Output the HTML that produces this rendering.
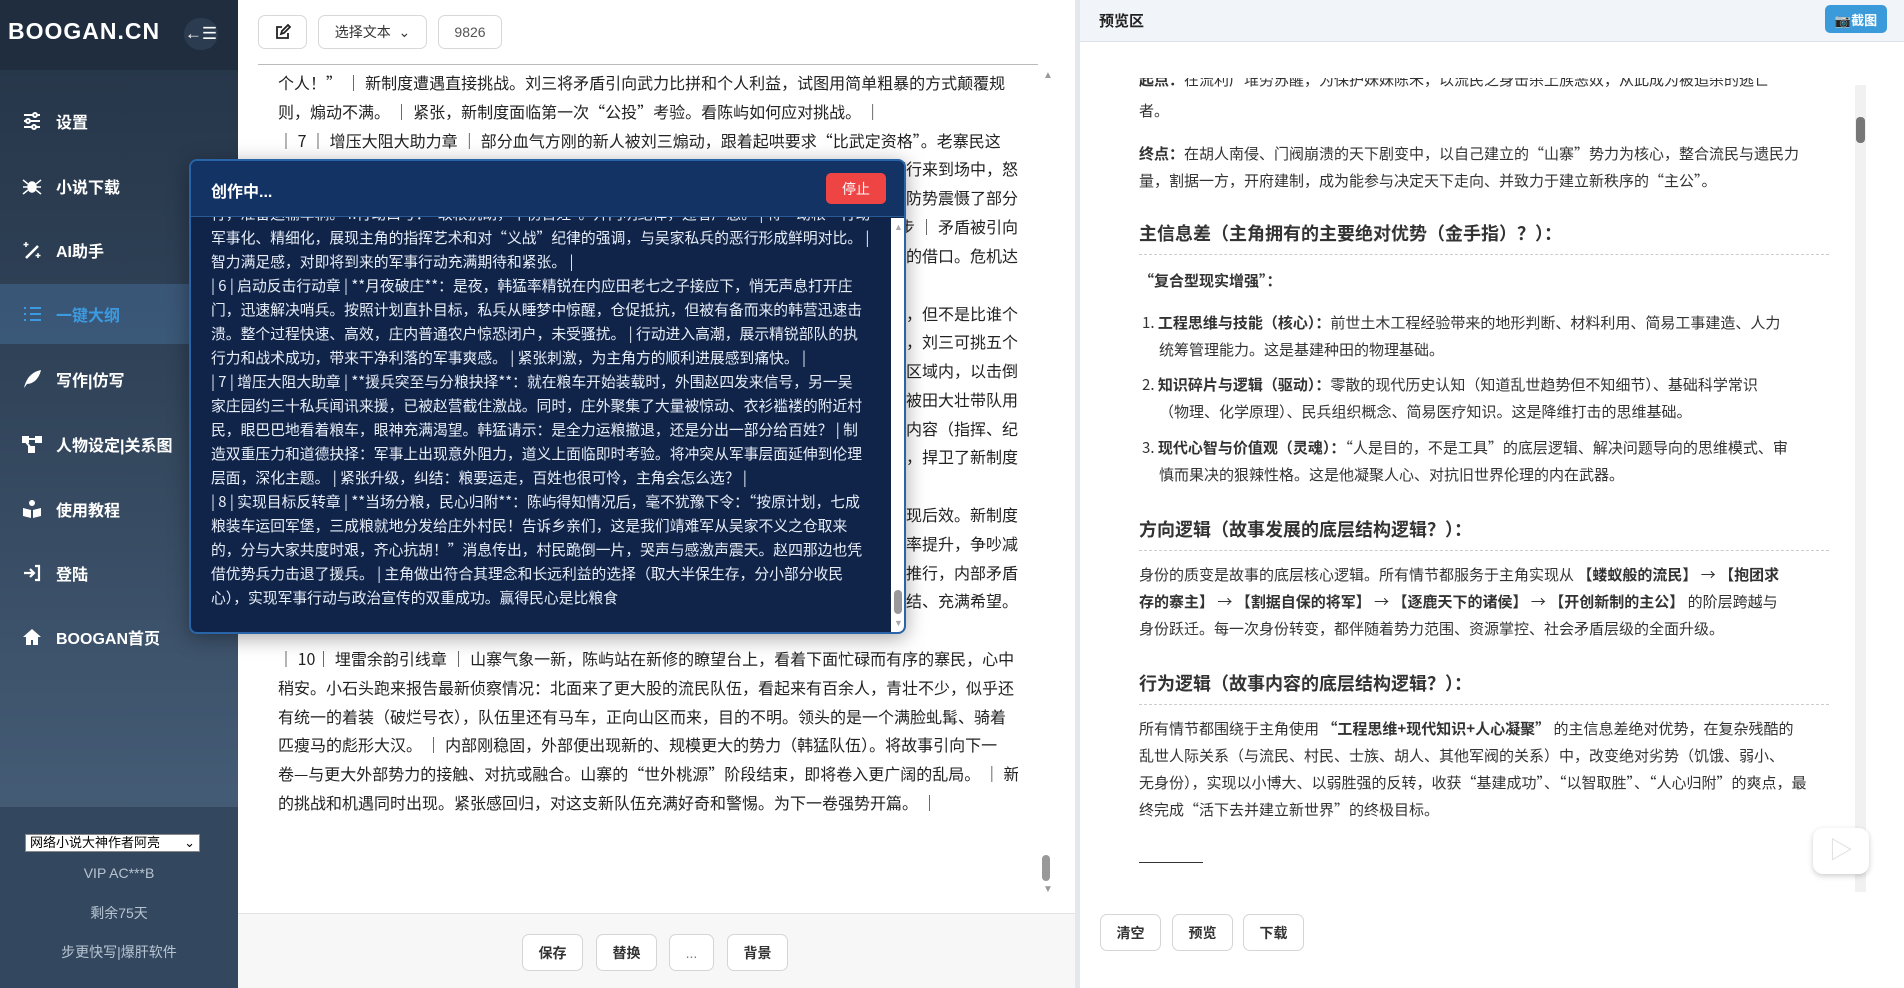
<!DOCTYPE html>
<html><head><meta charset="utf-8">
<style>
*{box-sizing:border-box;margin:0;padding:0}
body{width:1904px;height:988px;overflow:hidden;position:relative;font-family:"Liberation Sans","Noto Sans CJK SC",sans-serif;background:#fff}
.side{position:absolute;left:0;top:0;width:238px;height:988px;background:linear-gradient(180deg,#253447 0%,#31445a 40%,#445b75 80%,#3f566f 100%)}
.side .hd{height:70px;background:#1f2d3e;position:relative}
.logo{position:absolute;left:8px;top:18px;color:#fff;font-size:23px;font-weight:bold;letter-spacing:1px}
.coll{position:absolute;left:184px;top:18px;width:34px;height:32px;border-radius:16px;background:#2c3c50;color:#fff;font-size:17px;text-align:center;line-height:32px}
.mi{position:absolute;left:0;width:238px;height:60px;color:#fff;font-size:16px;font-weight:bold;display:flex;align-items:center}
.mi svg{width:20px;height:20px;margin-left:22px;margin-right:14px}
.mi.act{background:rgba(80,130,180,.35);color:#3c9be0}
.sbot{position:absolute;left:0;top:807px;width:238px;height:181px;background:#33485f}
.sel{position:absolute;left:25px;top:834px;width:175px;height:18px;background:#fff;border:1px solid #888;font-size:13px;color:#000;padding-left:4px;line-height:16px}
.sbt{position:absolute;left:0;width:238px;text-align:center;color:#b8c4d2;font-size:14px}
.ed{position:absolute;left:238px;top:0;width:837px;height:988px;background:#fff}
.tb{position:absolute;top:15px;height:34px;border:1px solid #d8d8d8;border-radius:7px;background:#fff;font-size:14px;color:#333;display:flex;align-items:center;justify-content:center}
.line{position:absolute;left:20px;width:780px;height:1px;top:64px;background:#bbb}
.et{position:absolute;left:40px;width:740px;font-family:"Noto Sans CJK SC",sans-serif;font-size:16px;color:#222;height:29px;line-height:29px;white-space:nowrap;overflow:hidden}
.et.r{display:flex;justify-content:flex-end}
.ebot{position:absolute;left:0;top:913px;width:837px;height:75px;background:#f7f7f8;border-top:1px solid #e3e3e3}
.bb{position:absolute;top:20px;height:37px;border:1px solid #d5d5d5;border-radius:7px;background:#fff;font-size:14px;font-weight:bold;color:#333;display:flex;align-items:center;justify-content:center}
.divd{position:absolute;left:1075px;top:0;width:5px;height:988px;background:#e4e7eb}
.pv{position:absolute;left:1080px;top:0;width:824px;height:988px;background:#fff}
.pvh{height:42px;background:#f1f4f8;border-bottom:1px solid #dfe3e8;position:relative}
.pvh b{position:absolute;left:19px;top:10px;font-size:15px;color:#222}
.shot{position:absolute;left:745px;top:5px;width:62px;height:28px;background:#3b9ad9;border-radius:5px;color:#fff;font-size:13px;font-weight:bold;display:flex;align-items:center;justify-content:center}
.pc{position:absolute;left:59px;width:690px;font-family:"Noto Sans CJK SC",sans-serif;font-size:15px;color:#333;line-height:27px}
.pc p{white-space:nowrap}
.h3{font-size:18px;font-weight:bold;position:absolute;left:59px;width:690px;border-bottom:1px dashed #ccc;padding-bottom:8px;font-family:"Noto Sans CJK SC",sans-serif;color:#333}
.modal{position:absolute;left:189px;top:159px;width:717px;height:475px;border:2px solid #2a64a8;border-radius:8px;background:#10244a;overflow:hidden;box-shadow:0 4px 20px rgba(0,0,0,.35)}
.mh{position:absolute;left:0;top:0;width:100%;height:56px;background:#123364;border-bottom:1px solid #2a5a95;z-index:2}
.mh b{position:absolute;left:20px;top:17px;color:#fff;font-size:16px}
.stop{position:absolute;left:635px;top:12px;width:60px;height:31px;background:#ef4444;border-radius:5px;color:#fff;font-size:14px;display:flex;align-items:center;justify-content:center}
.mb{position:absolute;left:20px;top:41px;width:675px;font-family:"Noto Sans CJK SC",sans-serif;font-size:14.8px;color:#e6edf7;line-height:24px}
.mb div{white-space:nowrap;overflow:hidden}
.msb{position:absolute;left:700px;top:57px;width:14px;height:414px;background:#fff}
</style></head><body>
<div class="side">
 <div class="hd"><div class="logo">BOOGAN.CN</div><div class="coll">←☰</div></div>
 <div class="mi" style="top:91px"><svg viewBox="0 0 20 20" fill="none" stroke="#fff" stroke-width="2"><path d="M2 4h16M2 10h16M2 16h16"/><circle cx="13" cy="4" r="2" fill="#3a4d63"/><circle cx="6" cy="10" r="2" fill="#3a4d63"/><circle cx="12" cy="16" r="2" fill="#3a4d63"/></svg>设置</div>
 <div class="mi" style="top:156px"><svg viewBox="0 0 20 20" fill="#fff" stroke="#fff" stroke-width="1.5"><ellipse cx="10" cy="11" rx="4" ry="5"/><path d="M6 8L1 4M6 11H1M6 14l-5 4M14 8l5-4M14 11h5M14 14l5 4" fill="none"/></svg>小说下载</div>
 <div class="mi" style="top:220px"><svg viewBox="0 0 20 20" fill="none" stroke="#fff" stroke-width="2.5"><path d="M4 18L16 6"/><path d="M4 2v5M1.5 4.5h5M16 13v5M13.5 15.5h5" stroke-width="1.5"/></svg>AI助手</div>
 <div class="mi act" style="top:284px"><svg viewBox="0 0 20 20" fill="none" stroke="#3c9be0" stroke-width="2"><path d="M8 4h11M8 10h11M8 16h11M2 4h2M2 10h2M2 16h2"/></svg>一键大纲</div>
 <div class="mi" style="top:349px"><svg viewBox="0 0 20 20" fill="#fff"><path d="M2 19C4 10 9 3 19 1 17 10 11 15 5 15L2 19z"/></svg>写作|仿写</div>
 <div class="mi" style="top:414px"><svg viewBox="0 0 20 20" fill="#fff" stroke="#fff" stroke-width="2"><rect x="1" y="3" width="5" height="5"/><rect x="14" y="3" width="5" height="5"/><rect x="7" y="13" width="5" height="5"/><path d="M6 5h8M4 8l5 6"/></svg>人物设定|关系图</div>
 <div class="mi" style="top:479px"><svg viewBox="0 0 20 20" fill="#fff"><circle cx="10" cy="4" r="3"/><path d="M1 9l8 2v8l-8-2zM19 9l-8 2v8l8-2z"/></svg>使用教程</div>
 <div class="mi" style="top:543px"><svg viewBox="0 0 20 20" fill="none" stroke="#fff" stroke-width="2.2"><path d="M2 10h10M8 6l4 4-4 4M13 3h4v14h-4"/></svg>登陆</div>
 <div class="mi" style="top:607px"><svg viewBox="0 0 20 20" fill="#fff"><path d="M10 2L1 10h3v8h5v-5h2v5h5v-8h3z"/></svg>BOOGAN首页</div>
 <div class="sbot"></div>
 <div class="sel">网络小说大神作者阿亮 <span style="float:right;margin-right:4px">⌄</span></div>
 <div class="sbt" style="top:865px">VIP AC***B</div>
 <div class="sbt" style="top:903px">剩余75天</div>
 <div class="sbt" style="top:942px">步更快写|爆肝软件</div>
</div>

<div class="ed">
 <div class="tb" style="left:20px;width:49px"><svg width="16" height="16" viewBox="0 0 16 16" fill="none" stroke="#222" stroke-width="1.8"><path d="M7 3H2v11h11V9"/><path d="M6 10l1-3 6-6 2 2-6 6z"/></svg></div>
 <div class="tb" style="left:80px;width:109px">选择文本 &nbsp;⌄</div>
 <div class="tb" style="left:200px;width:64px;color:#555">9826</div>
 <div class="line"></div>
 <div style="position:absolute;left:805px;top:70px;color:#999;font-size:10px">▲</div>
 <div style="position:absolute;left:804px;top:855px;width:8px;height:26px;background:#999;border-radius:4px"></div>
 <div style="position:absolute;left:805px;top:884px;color:#999;font-size:10px">▼</div>
 <div class="et" style="top:68px">个人！” ｜ 新制度遭遇直接挑战。刘三将矛盾引向武力比拼和个人利益，试图用简单粗暴的方式颠覆规</div>
 <div class="et" style="top:97px">则，煽动不满。 ｜ 紧张，新制度面临第一次“公投”考验。看陈屿如何应对挑战。 ｜</div>
 <div class="et" style="top:126px">｜ 7 ｜ 增压大阻大助力章 ｜ 部分血气方刚的新人被刘三煽动，跟着起哄要求“比武定资格”。老寨民这</div>
 <div class="et r" style="top:154px"><span>边也有人不服，双方剑拔弩张。此时陈屿带着几名护卫缓步而行来到场中，怒</span></div>
 <div class="et r" style="top:183px"><span>火在人群中蔓延，但他只是平静地看着众人，用沉稳的攻防势震慑了部分</span></div>
 <div class="et r" style="top:212px"><span>人心，局势暂时稳住。众人开始冷静下来思考下一步 ｜ 矛盾被引向</span></div>
 <div class="et r" style="top:241px"><span>新的方向，刘三发现自己失去了继续挑事的借口。危机达</span></div>
 <div class="et r" style="top:299px"><span>陈屿宣布同意比武，但不是比谁个</span></div>
 <div class="et r" style="top:327px"><span>人武艺高强，而是比谁组织得好，刘三可挑五个</span></div>
 <div class="et r" style="top:356px"><span>人，老寨民也出五人，在划定的区域内，以击倒</span></div>
 <div class="et r" style="top:385px"><span>对方为胜。结果刘三一方被田大壮带队用</span></div>
 <div class="et r" style="top:414px"><span>训练内容（指挥、纪</span></div>
 <div class="et r" style="top:442px"><span>律）轻松击败，捍卫了新制度</span></div>
 <div class="et r" style="top:500px"><span>制度初现后效。新制度</span></div>
 <div class="et r" style="top:529px"><span>效率提升，争吵减</span></div>
 <div class="et r" style="top:558px"><span>顺利推行，内部矛盾</span></div>
 <div class="et r" style="top:586px"><span>团结、充满希望。</span></div>
 <div class="et" style="top:644px">｜ 10｜ 埋雷余韵引线章 ｜ 山寨气象一新，陈屿站在新修的瞭望台上，看着下面忙碌而有序的寨民，心中</div>
 <div class="et" style="top:673px">稍安。小石头跑来报告最新侦察情况：北面来了更大股的流民队伍，看起来有百余人，青壮不少，似乎还</div>
 <div class="et" style="top:702px">有统一的着装（破烂号衣），队伍里还有马车，正向山区而来，目的不明。领头的是一个满脸虬髯、骑着</div>
 <div class="et" style="top:730px">匹瘦马的彪形大汉。 ｜ 内部刚稳固，外部便出现新的、规模更大的势力（韩猛队伍）。将故事引向下一</div>
 <div class="et" style="top:759px">卷—与更大外部势力的接触、对抗或融合。山寨的“世外桃源”阶段结束，即将卷入更广阔的乱局。 ｜ 新</div>
 <div class="et" style="top:788px">的挑战和机遇同时出现。紧张感回归，对这支新队伍充满好奇和警惕。为下一卷强势开篇。 ｜</div>
 <div class="ebot">
  <div class="bb" style="left:284px;width:61px">保存</div>
  <div class="bb" style="left:358px;width:61px">替换</div>
  <div class="bb" style="left:431px;width:45px;font-weight:normal;color:#777">...</div>
  <div class="bb" style="left:489px;width:61px">背景</div>
 </div>
</div>
<div class="divd"></div>

<div class="pv">
 <div class="pvh"><b>预览区</b><div class="shot">📷截图</div></div>
 <div style="position:absolute;left:775px;top:85px;width:11px;height:807px;background:#f1f1f1"></div>
 <div style="position:absolute;left:776px;top:117px;width:9px;height:26px;background:#777;border-radius:4px"></div>
 <div class="pc" style="top:78px;height:16px;overflow:hidden"><p style="margin-top:-12px"><b>起点：</b>在流利广堆劳苏醒，为保护妹妹陈禾，以流民之身击杀上族恶奴，从此成为被追杀的逃亡</p></div>
 <div class="pc" style="top:97px"><p>者。</p></div>
 <div class="pc" style="top:140px"><p><b>终点：</b>在胡人南侵、门阀崩溃的天下剧变中，以自己建立的“山寨”势力为核心，整合流民与遗民力</p><p>量，割据一方，开府建制，成为能参与决定天下走向、并致力于建立新秩序的“主公”。</p></div>
 <div class="h3" style="top:220px">主信息差（主角拥有的主要绝对优势（金手指）？）：</div>
 <div class="pc" style="top:267px"><p><b>“复合型现实增强”：</b></p></div>
 <div class="pc" style="top:309px;left:62px"><p>1. <b>工程思维与技能（核心）：</b>前世土木工程经验带来的地形判断、材料利用、简易工事建造、人力</p><p style="padding-left:17px">统筹管理能力。这是基建种田的物理基础。</p></div>
 <div class="pc" style="top:371px;left:62px"><p>2. <b>知识碎片与逻辑（驱动）：</b>零散的现代历史认知（知道乱世趋势但不知细节）、基础科学常识</p><p style="padding-left:17px">（物理、化学原理）、民兵组织概念、简易医疗知识。这是降维打击的思维基础。</p></div>
 <div class="pc" style="top:434px;left:62px"><p>3. <b>现代心智与价值观（灵魂）：</b>“人是目的，不是工具”的底层逻辑、解决问题导向的思维模式、审</p><p style="padding-left:17px">慎而果决的狠辣性格。这是他凝聚人心、对抗旧世界伦理的内在武器。</p></div>
 <div class="h3" style="top:516px">方向逻辑（故事发展的底层结构逻辑？）：</div>
 <div class="pc" style="top:561px"><p>身份的质变是故事的底层核心逻辑。所有情节都服务于主角实现从 <b>【蝼蚁般的流民】</b> → <b>【抱团求</b></p><p><b>存的寨主】</b> → <b>【割据自保的将军】</b> → <b>【逐鹿天下的诸侯】</b> → <b>【开创新制的主公】</b> 的阶层跨越与</p><p>身份跃迁。每一次身份转变，都伴随着势力范围、资源掌控、社会矛盾层级的全面升级。</p></div>
 <div class="h3" style="top:670px">行为逻辑（故事内容的底层结构逻辑？）：</div>
 <div class="pc" style="top:715px"><p>所有情节都围绕于主角使用 <b>“工程思维+现代知识+人心凝聚”</b> 的主信息差绝对优势，在复杂残酷的</p><p>乱世人际关系（与流民、村民、士族、胡人、其他军阀的关系）中，改变绝对劣势（饥饿、弱小、</p><p>无身份），实现以小博大、以弱胜强的反转，收获“基建成功”、“以智取胜”、“人心归附”的爽点，最</p><p>终完成“活下去并建立新世界”的终极目标。</p></div>
 <div style="position:absolute;left:59px;top:862px;width:64px;height:1px;background:#333"></div>
 <div style="position:absolute;left:733px;top:828px;width:56px;height:46px;border-radius:10px;background:#fff;box-shadow:0 2px 6px rgba(0,0,0,.2);color:#ddd;font-size:24px;text-align:center;line-height:46px">▷</div>
 <div class="bb" style="left:20px;top:914px;width:61px">清空</div>
 <div class="bb" style="left:92px;top:914px;width:61px">预览</div>
 <div class="bb" style="left:163px;top:914px;width:61px">下载</div>
</div>

<div class="modal">
 <div class="mh"><b>创作中...</b><div class="stop">停止</div></div>
 <div class="mb">
  <div>行，准备运输车辆。4.行动口号：“取粮抗胡，不伤百姓”。开门明纪律，违者严惩。 | 将“劫粮”行动</div>
  <div>军事化、精细化，展现主角的指挥艺术和对“义战”纪律的强调，与吴家私兵的恶行形成鲜明对比。 |</div>
  <div>智力满足感，对即将到来的军事行动充满期待和紧张。 |</div>
  <div>| 6 | 启动反击行动章 | **月夜破庄**：是夜，韩猛率精锐在内应田老七之子接应下，悄无声息打开庄</div>
  <div>门，迅速解决哨兵。按照计划直扑目标，私兵从睡梦中惊醒，仓促抵抗，但被有备而来的韩营迅速击</div>
  <div>溃。整个过程快速、高效，庄内普通农户惊恐闭户，未受骚扰。 | 行动进入高潮，展示精锐部队的执</div>
  <div>行力和战术成功，带来干净利落的军事爽感。 | 紧张刺激，为主角方的顺利进展感到痛快。 |</div>
  <div>| 7 | 增压大阻大助章 | **援兵突至与分粮抉择**：就在粮车开始装载时，外围赵四发来信号，另一吴</div>
  <div>家庄园约三十私兵闻讯来援，已被赵营截住激战。同时，庄外聚集了大量被惊动、衣衫褴褛的附近村</div>
  <div>民，眼巴巴地看着粮车，眼神充满渴望。韩猛请示：是全力运粮撤退，还是分出一部分给百姓？ | 制</div>
  <div>造双重压力和道德抉择：军事上出现意外阻力，道义上面临即时考验。将冲突从军事层面延伸到伦理</div>
  <div>层面，深化主题。 | 紧张升级，纠结：粮要运走，百姓也很可怜，主角会怎么选？ |</div>
  <div>| 8 | 实现目标反转章 | **当场分粮，民心归附**：陈屿得知情况后，毫不犹豫下令：“按原计划，七成</div>
  <div>粮装车运回军堡，三成粮就地分发给庄外村民！告诉乡亲们，这是我们靖难军从吴家不义之仓取来</div>
  <div>的，分与大家共度时艰，齐心抗胡！”消息传出，村民跪倒一片，哭声与感激声震天。赵四那边也凭</div>
  <div>借优势兵力击退了援兵。 | 主角做出符合其理念和长远利益的选择（取大半保生存，分小部分收民</div>
  <div>心），实现军事行动与政治宣传的双重成功。赢得民心是比粮食</div>
 </div>
 <div class="msb"><div style="position:absolute;left:3px;top:4px;color:#aaa;font-size:9px">▲</div><div style="position:absolute;left:3px;top:372px;width:8px;height:24px;background:#999;border-radius:4px"></div><div style="position:absolute;left:3px;top:400px;color:#aaa;font-size:9px">▼</div></div>
</div>
</body></html>
